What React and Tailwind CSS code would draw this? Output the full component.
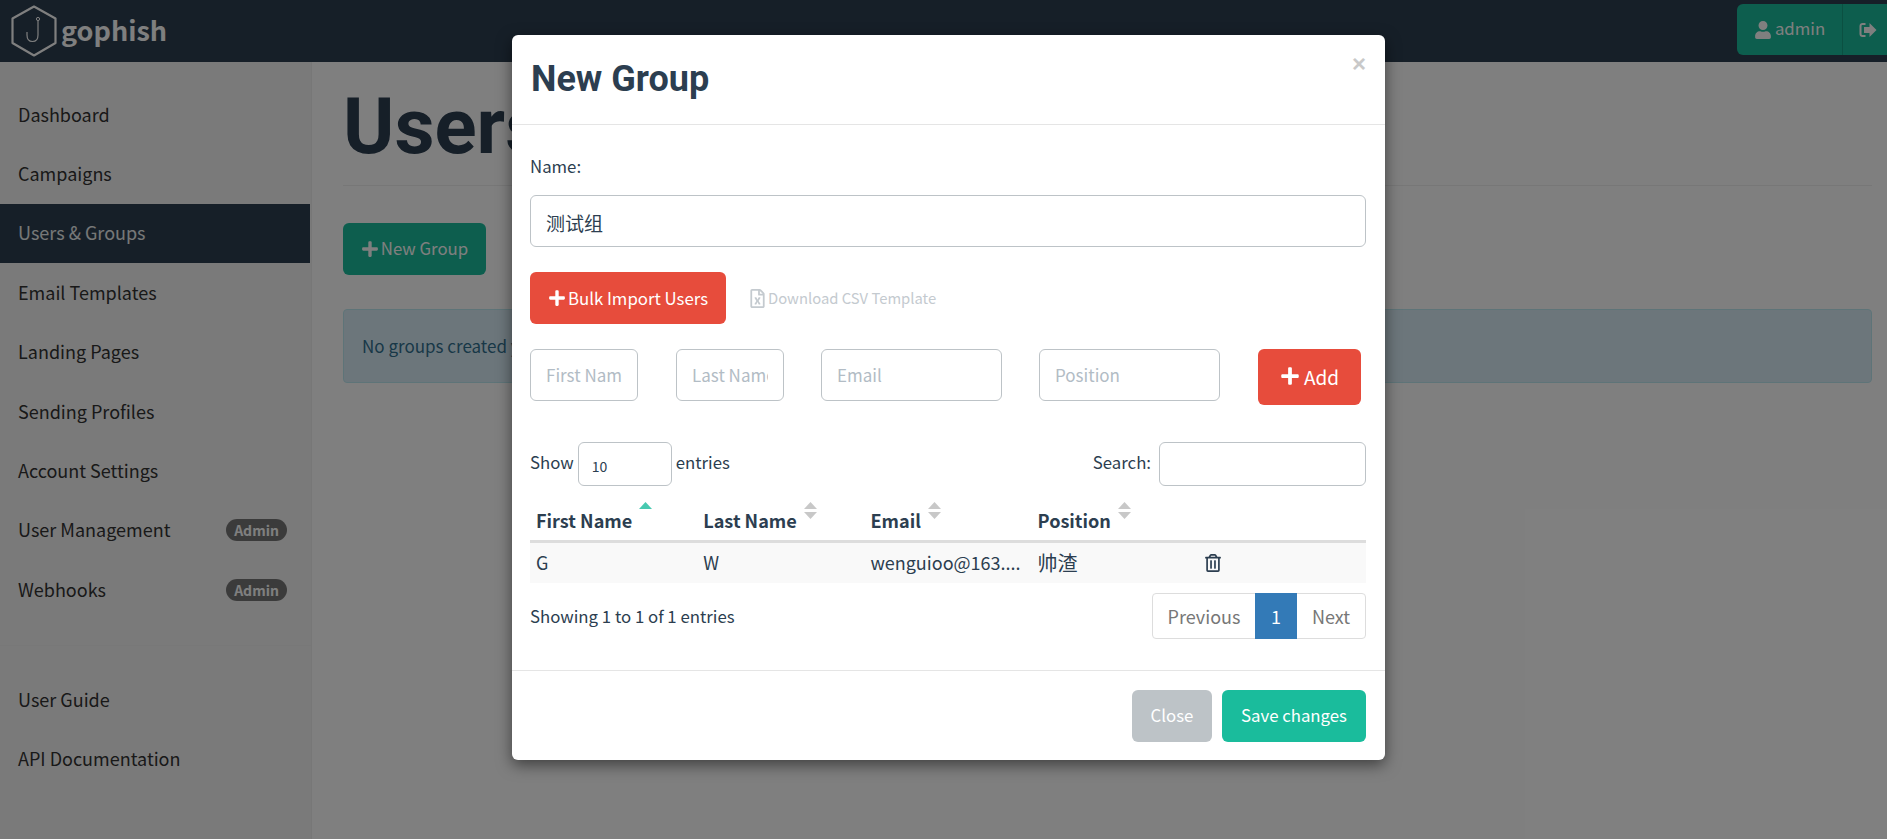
import React from "react";
import { FaPlus, FaUser, FaRegFileExcel, FaRegTrashAlt } from "react-icons/fa";

const NAV_TOP = [
  { label: "Dashboard" },
  { label: "Campaigns" },
  { label: "Users & Groups", active: true },
  { label: "Email Templates" },
  { label: "Landing Pages" },
  { label: "Sending Profiles" },
  { label: "Account Settings" },
  { label: "User Management", badge: true },
  { label: "Webhooks", badge: true },
];

const Logo = () => (
  <svg width="46" height="52" viewBox="0 0 46 52" fill="none" className="shrink-0">
    <path d="M23 1.5 L44.5 13.5 V38 L23 50.5 L1.5 38 V13.5 Z" stroke="#fff" strokeWidth="2.2" strokeLinejoin="round" />
    <circle cx="27" cy="14" r="1.6" stroke="#fff" strokeWidth="1" />
    <path d="M27 16 V30 C27 34.5 24.5 36.5 21.5 36.5 C18.5 36.5 16 34.5 16 30 V27" stroke="#fff" strokeWidth="1.2" />
  </svg>
);

const SignOut = () => (
  <svg width="18" height="16" viewBox="0 0 18 16" fill="currentColor">
    <path d="M6.5 1 H3.5 C1.8 1 .5 2.3 .5 4 V12 C.5 13.7 1.8 15 3.5 15 H6.5 V13 H3.5 C2.9 13 2.5 12.6 2.5 12 V4 C2.5 3.4 2.9 3 3.5 3 H6.5 Z" />
    <path d="M10.5 1 L17.5 8 L10.5 15 V11 H5 V5 H10.5 Z" />
  </svg>
);

const SortIcon = ({ asc }) => (
  <svg width="13" height="17" viewBox="0 0 13 17" className="ml-[7px] mt-[-6px] shrink-0">
    <path d="M6.5 0 L13 7 H0 Z" fill={asc ? "#48c9b0" : "#c8c8c8"} />
    {!asc && <path d="M0 10 H13 L6.5 17 Z" fill="#c8c8c8" />}
  </svg>
);

const Sidebar = () => (
  <aside className="w-[312px] shrink-0 bg-[#f5f5f5] border-r border-[#eeeeee] pt-[23px] text-[18px] text-[#333333]">
    {NAV_TOP.map((item) => (
      <div
        key={item.label}
        className={`h-[59.4px] pl-[18px] pr-[23px] w-[310px] flex items-center justify-between leading-[24px] ${
          item.active ? "bg-[#2c3e50] text-[#ecf0f1]" : ""
        }`}
      >
        <span className="mt-[-2px]">{item.label}</span>
        {item.badge && (
          <span className="w-[61px] h-[22px] rounded-full bg-[#777777] text-white text-[14px] font-bold flex items-center justify-center leading-none">
            Admin
          </span>
        )}
      </div>
    ))}
    <div className="h-px bg-[#f0f0f0] mt-[25px] mb-[25px]" />
    <div className="h-[59.4px] pl-[18px] flex items-center mt-[-1px]">User Guide</div>
    <div className="h-[59.4px] pl-[18px] flex items-center">API Documentation</div>
  </aside>
);

const Field = ({ placeholder, className }) => (
  <input
    placeholder={placeholder}
    className={`h-[52px] rounded-[6px] border border-[#bdc3c7] pl-[15px] pr-[15px] pb-[2px] text-[17px] text-[#2c3e50] outline-none placeholder:text-[#b2bcc5] ${className}`}
  />
);

const Modal = () => (
  <div className="absolute left-[512px] top-[35px] w-[873px] h-[725px] bg-white rounded-[6px] shadow-[0_5px_15px_rgba(0,0,0,0.5)] text-[#2c3e50] text-[16.8px]">
    {/* Header */}
    <div className="relative h-[90px] border-b border-[#e5e5e5] pl-[19px] pt-[19px]">
      <h4 className="font-['Roboto',sans-serif] font-bold text-[36px] leading-[50px]">New Group</h4>
      <span className="absolute right-[19px] top-[17px] font-['Liberation_Sans',sans-serif] font-bold text-[24px] leading-[24px] text-[#c9c9c9]">×</span>
    </div>

    {/* Body */}
    <div className="pl-[18px] pr-[19px]">
      <div className="h-[70px] flex items-start pt-[29px] leading-[24px]">Name:</div>
      <input
        readOnly
        value="测试组"
        className="w-[836px] h-[52px] rounded-[6px] border border-[#bdc3c7] pl-[15px] pt-[2px] text-[19px] text-[#2c3e50] outline-none"
      />

      <div className="flex items-center mt-[25px]">
        <button className="w-[196px] h-[52px] rounded-[6px] bg-[#e74c3c] text-white flex items-center justify-center gap-[2px] leading-none">
          <FaPlus className="text-[18px]" />
          Bulk Import Users
        </button>
        <span className="ml-[22px] flex items-center gap-[1px] text-[14.8px] text-[#c4cacf]">
          <FaRegFileExcel className="text-[19px]" />
          Download CSV Template
        </span>
      </div>

      <div className="flex items-start mt-[25px]">
        <Field placeholder="First Name" className="w-[108px]" />
        <Field placeholder="Last Name" className="w-[108px] ml-[38px]" />
        <Field placeholder="Email" className="w-[181px] ml-[37px]" />
        <Field placeholder="Position" className="w-[181px] ml-[37px]" />
        <button className="w-[103px] h-[56px] ml-[38px] pb-[2px] rounded-[6px] bg-[#e74c3c] text-white text-[19px] flex items-center justify-center gap-[4px] leading-none">
          <FaPlus className="text-[20px]" />
          Add
        </button>
      </div>

      <div className="flex items-center justify-between mt-[37px] h-[44px]">
        <div className="flex items-center">
          <span className="mr-[4px] mb-[3px]">Show</span>
          <select className="w-[94px] h-[44px] appearance-none rounded-[6px] border border-[#bdc3c7] pl-[13px] pt-[4px] text-[14px] bg-white outline-none">
            <option>10</option>
          </select>
          <span className="ml-[4px] mb-[3px]">entries</span>
        </div>
        <div className="flex items-center">
          <span className="mr-[8px] mb-[3px]">Search:</span>
          <input className="w-[207px] h-[44px] rounded-[6px] border border-[#bdc3c7] outline-none" />
        </div>
      </div>

      {/* Users table */}
      <table className="w-[836px] table-fixed mt-[10px] text-[18px]">
        <thead>
          <tr className="border-b-[3px] border-[#dddddd] h-[45px]">
            {["First Name", "Last Name", "Email", "Position", ""].map((col, i) => (
              <th key={i} className="w-[167px] px-[6px] pt-[5px] text-left font-bold text-[18.1px] leading-[24px]">
                {col && (
                  <span className="flex items-start">
                    {col}
                    <SortIcon asc={i === 0} />
                  </span>
                )}
              </th>
            ))}
          </tr>
        </thead>
        <tbody>
          <tr className="bg-[#f9f9f9] h-[42px]">
            <td className="px-[6px]">G</td>
            <td className="px-[6px]">W</td>
            <td className="px-[6px] whitespace-nowrap overflow-hidden">wenguioo@163....</td>
            <td className="px-[6px] text-[20px]">帅渣</td>
            <td className="px-[6px]">
              <FaRegTrashAlt className="ml-[-1px] text-[18px]" />
            </td>
          </tr>
        </tbody>
      </table>

      <div className="flex items-start justify-between mt-[10px]">
        <span className="mt-[11px] leading-[24px]">Showing 1 to 1 of 1 entries</span>
        <div className="flex h-[46px] rounded-[4px] border border-[#dddddd] text-[#777777] text-[18px]">
          <span className="w-[102px] flex items-center justify-center">Previous</span>
          <span className="w-[42px] -my-px bg-[#337ab7] text-white flex items-center justify-center">1</span>
          <span className="w-[68px] flex items-center justify-center">Next</span>
        </div>
      </div>
    </div>

    {/* Footer */}
    <div className="mt-[31px] border-t border-[#e5e5e5] pt-[19px] pr-[19px] flex justify-end gap-[10px]">
      <button className="w-[80px] h-[52px] rounded-[6px] bg-[#bdc3c7] text-white">Close</button>
      <button className="w-[144px] h-[52px] rounded-[6px] bg-[#1abc9c] text-white">Save changes</button>
    </div>
  </div>
);

export default function App() {
  return (
    <div className="relative h-screen overflow-hidden bg-white font-['Noto_Sans_CJK_SC',sans-serif]">
      {/* Navbar */}
      <header className="h-[62px] bg-[#2c3e50] flex items-center justify-between pl-[11px]">
        <div className="flex items-center gap-[4px]">
          <Logo />
          <span className="text-white font-bold text-[27px] leading-none mb-[4px]">gophish</span>
        </div>
        <div className="flex h-[51px] w-[150px] rounded-l-[6px] bg-[#1abc9c] text-white text-[16.8px] mb-[3px]">
          <div className="w-[106px] flex items-center justify-center gap-[3px] border-r border-[#16a085]">
            <FaUser className="text-[18px]" />
            <span className="mb-[2px]">admin</span>
          </div>
          <div className="flex-1 flex items-center pl-[16px]">
            <SignOut />
          </div>
        </div>
      </header>

      <div className="flex h-[777px]">
        <Sidebar />
        {/* Main content */}
        <main className="flex-1 pl-[31px] pr-[15px] text-[16.8px]">
          <h1 className="font-['Roboto',sans-serif] font-bold text-[78px] leading-[88px] text-[#2c3e50] pt-[21px] h-[124px] border-b border-[#eeeeee]">
            Users
          </h1>
          <button className="mt-[37px] w-[143px] h-[52px] rounded-[6px] bg-[#1abc9c] text-white flex items-center justify-center gap-[2px]">
            <FaPlus className="text-[18px]" />
            New Group
          </button>
          <div className="mt-[34px] h-[74px] rounded-[4px] border border-[#bce8f1] bg-[#d9edf7] text-[#31708f] text-[17px] pl-[18px] flex items-center">
            No groups created yet. Let's create one!
          </div>
        </main>
      </div>

      {/* Backdrop */}
      <div className="absolute inset-0 bg-black/50" />
      <Modal />
    </div>
  );
}
